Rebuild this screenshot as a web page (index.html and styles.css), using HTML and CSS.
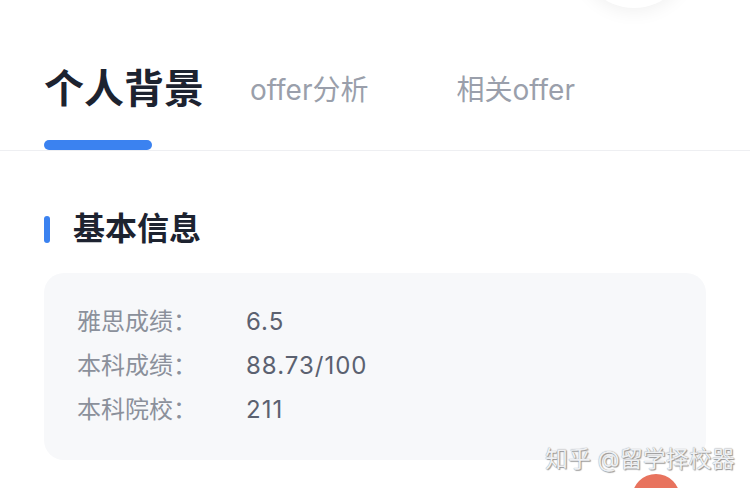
FILE: index.html
```html
<!DOCTYPE html>
<html lang="zh-CN">
<head>
    <meta charset="UTF-8">
    <meta name="viewport" content="width=device-width, initial-scale=1.0">
    <title>个人背景</title>
    <link rel="stylesheet" href="styles.css">
</head>
<body>
    <div class="page">
        <div class="avatar"></div>

        <div class="tabs">
            <div class="tab active">个人背景</div>
            <div class="tab">offer分析</div>
            <div class="tab">相关offer</div>
        </div>

        <div class="section">
            <h2 class="section-title">基本信息</h2>
            <div class="card">
                <div class="row">
                    <span class="label">雅思成绩：</span>
                    <span class="value">6.5</span>
                </div>
                <div class="row">
                    <span class="label">本科成绩：</span>
                    <span class="value">88.73/100</span>
                </div>
                <div class="row">
                    <span class="label">本科院校：</span>
                    <span class="value">211</span>
                </div>
            </div>
        </div>

        <div class="watermark">知乎 @留学择校器</div>
        <div class="fab"></div>
    </div>
</body>
</html>
```

FILE: styles.css
```css
body {
    margin: 0;
    padding: 0;
    background: #fff;
    font-family: Inter, "Noto Sans CJK SC", sans-serif;
    overflow: hidden;
}

.page {
    position: relative;
    width: 750px;
    height: 488px;
    overflow: hidden;
}

.avatar {
    position: absolute;
    left: 578px;
    top: -104px;
    width: 112px;
    height: 112px;
    border-radius: 50%;
    background: #fff;
    box-shadow: 0 4px 18px rgba(0, 0, 0, 0.06);
}

.tabs {
    display: flex;
    align-items: flex-end;
    padding: 62px 0 0 44px;
    height: 88px;
    box-sizing: content-box;
    border-bottom: 1px solid #eeeff2;
}

.tab {
    position: relative;
    font-size: 28px;
    color: #9a9fab;
    line-height: 1;
    padding-bottom: 46px;
    margin-right: 88px;
}

.tab.active {
    font-size: 40px;
    font-weight: bold;
    color: #1d2330;
    margin-right: 46px;
    padding-bottom: 41px;
}

.tab.active::after {
    content: "";
    position: absolute;
    left: 0;
    bottom: 0;
    width: 108px;
    height: 10px;
    border-radius: 5px;
    background: #3b82f0;
}

.section {
    padding: 0 44px;
}

.section-title {
    position: relative;
    margin: 58px 0 24px;
    padding-left: 29px;
    font-size: 32px;
    font-weight: bold;
    color: #1d2330;
    line-height: 40px;
}

.section-title::before {
    content: "";
    position: absolute;
    left: 0;
    top: 7px;
    width: 6px;
    height: 27px;
    border-radius: 3px;
    background: #3b82f0;
}

.card {
    background: #f7f8fa;
    border-radius: 20px;
    padding: 27px 33px 28px;
}

.row {
    display: flex;
    font-size: 24px;
    line-height: 44px;
}

.label {
    width: 169px;
    color: #8b909b;
}

.value {
    color: #5b6170;
    letter-spacing: 1px;
}

.watermark {
    position: absolute;
    left: 545px;
    top: 440px;
    font-size: 23px;
    color: #eef0f3;
    text-shadow: 0 0 1px #888, 1px 1px 1px #999;
}

.fab {
    position: absolute;
    left: 632px;
    top: 474px;
    width: 48px;
    height: 48px;
    border-radius: 50%;
    background: #e8735e;
}
```
